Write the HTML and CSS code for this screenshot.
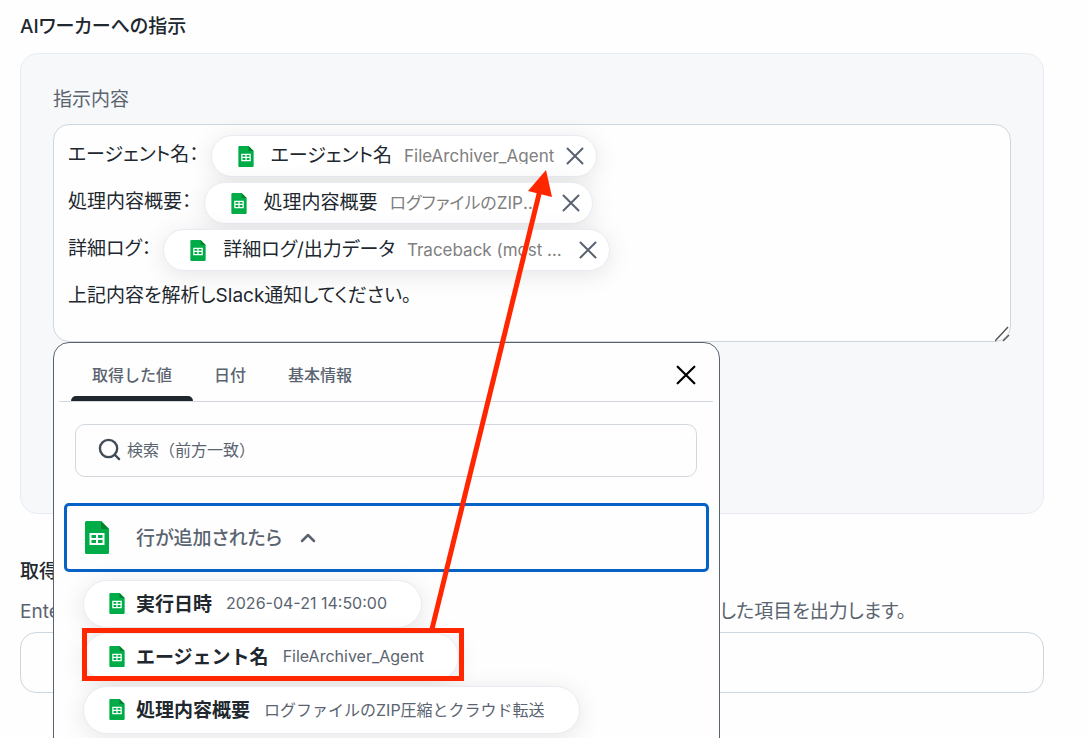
FILE: index.html
```html
<!DOCTYPE html>
<html lang="ja">
<head>
    <meta charset="UTF-8">
    <meta name="viewport" content="width=device-width, initial-scale=1.0">
    <title>AIワーカー設定</title>
    <link rel="stylesheet" href="styles.css">
</head>
<body>
    <!-- shared icons -->
    <svg class="sprite" aria-hidden="true">
        <symbol id="icon-sheet" viewBox="0 0 24 33">
            <path d="M1.5 0H16l8 8v23.5a1.5 1.5 0 0 1-1.5 1.5h-21A1.5 1.5 0 0 1 0 31.5V1.5A1.5 1.5 0 0 1 1.5 0z" fill="#00ac47"/>
            <path d="M16 0l8 8h-6.5a1.5 1.5 0 0 1-1.5-1.5z" fill="#00832d"/>
            <path d="M4.5 12h15v12h-15zM6.5 14v3h4.5v-3zm6.5 0v3h4.5v-3zm-6.5 5v3h4.5v-3zm6.5 0v3h4.5v-3z" fill="#fff" fill-rule="evenodd"/>
        </symbol>
        <symbol id="icon-close" viewBox="0 0 18 18">
            <path d="M1.5 1.5l15 15M16.5 1.5l-15 15" fill="none" stroke="currentColor" stroke-linecap="round"/>
        </symbol>
    </svg>

    <main class="page">
        <section class="section">
            <h2 class="section-title">AIワーカーへの指示</h2>
            <div class="panel">
                <div class="panel-label" id="editor-label">指示内容</div>
                <div class="editor-wrap">
                    <div class="editor" role="textbox" aria-multiline="true" aria-labelledby="editor-label" contenteditable="true" spellcheck="false">
                        <p class="line">エージェント名：
                            <span class="chip" contenteditable="false">
                                <svg class="chip-icon"><use href="#icon-sheet"/></svg>
                                <span class="chip-name">エージェント名</span>
                                <span class="chip-value">FileArchiver_Agent</span>
                                <button class="chip-remove" type="button" aria-label="削除"><svg><use href="#icon-close"/></svg></button>
                            </span>
                        </p>
                        <p class="line">処理内容概要：
                            <span class="chip" contenteditable="false">
                                <svg class="chip-icon"><use href="#icon-sheet"/></svg>
                                <span class="chip-name">処理内容概要</span>
                                <span class="chip-value">ログファイルのZIP圧縮とクラウド転送</span>
                                <button class="chip-remove" type="button" aria-label="削除"><svg><use href="#icon-close"/></svg></button>
                            </span>
                        </p>
                        <p class="line">詳細ログ：
                            <span class="chip" contenteditable="false">
                                <svg class="chip-icon"><use href="#icon-sheet"/></svg>
                                <span class="chip-name">詳細ログ/出力データ</span>
                                <span class="chip-value">Traceback (most recent call last)</span>
                                <button class="chip-remove" type="button" aria-label="削除"><svg><use href="#icon-close"/></svg></button>
                            </span>
                        </p>
                        <p class="line">上記内容を解析しSlack通知してください。</p>
                    </div>
                    <svg class="resize-grip" viewBox="0 0 16 16"><path d="M0 15L13 1M8 15l6-6" fill="none" stroke="#555" stroke-width="1.5"/></svg>

                    <!-- value picker, opens under the editor -->
                    <div class="picker">
                        <div class="tab-bar">
                            <div class="tabs" role="tablist">
                                <button class="tab active" type="button" role="tab" aria-selected="true">取得した値</button>
                                <button class="tab" type="button" role="tab" aria-selected="false">日付</button>
                                <button class="tab" type="button" role="tab" aria-selected="false">基本情報</button>
                            </div>
                            <button class="picker-close" type="button" aria-label="閉じる"><svg><use href="#icon-close"/></svg></button>
                        </div>
                        <label class="search">
                            <svg class="search-icon" viewBox="0 0 24 24"><circle cx="11" cy="11" r="9" fill="none" stroke="#424c57" stroke-width="2.5"/><path d="M17.5 17.5l4.5 4.5" stroke="#424c57" stroke-width="2.5" stroke-linecap="round"/></svg>
                            <input class="search-input" type="text" aria-label="検索" placeholder="検索（前方一致）">
                        </label>
                        <button class="group" type="button" aria-expanded="true">
                            <svg class="group-icon"><use href="#icon-sheet"/></svg>
                            <span class="group-name">行が追加されたら</span>
                            <svg class="chevron" viewBox="0 0 16 10"><path d="M2 8l6-6 6 6" fill="none" stroke="currentColor" stroke-width="2.5" stroke-linecap="round" stroke-linejoin="round"/></svg>
                        </button>
                        <div class="options">
                            <button class="option" type="button">
                                <svg class="chip-icon"><use href="#icon-sheet"/></svg>
                                <span class="option-name">実行日時</span>
                                <span class="option-value">2026-04-21 14:50:00</span>
                            </button>
                            <button class="option" type="button">
                                <svg class="chip-icon"><use href="#icon-sheet"/></svg>
                                <span class="option-name">エージェント名</span>
                                <span class="option-value">FileArchiver_Agent</span>
                            </button>
                            <button class="option" type="button">
                                <svg class="chip-icon"><use href="#icon-sheet"/></svg>
                                <span class="option-name">処理内容概要</span>
                                <span class="option-value">ログファイルのZIP圧縮とクラウド転送</span>
                            </button>
                        </div>
                    </div>
                </div>
            </div>
        </section>

        <section class="section">
            <label class="section-title" for="output-items">取得したい項目</label>
            <p class="description">Enterキーを押すと項目を複数追加できます。AIワーカーの処理結果から、この欄で入力した項目を出力します。</p>
            <input class="text-input" type="text" id="output-items">
        </section>

        <!-- guide arrow from the option to the inserted chip -->
        <svg class="guide" viewBox="0 0 1088 738" aria-hidden="true">
            <rect x="84.5" y="630.5" width="377" height="48"/>
            <path class="guide-line" d="M432 629L540 190"/>
            <path class="guide-head" d="M546 170L528 191L552 197z"/>
        </svg>
    </main>
</body>
</html>
```

FILE: styles.css
```css
* {
    box-sizing: border-box;
}

body {
    margin: 0;
    overflow: hidden;
    background: #fefefe;
    color: #21272e;
    font-family: Inter, "Noto Sans CJK JP", sans-serif;
    font-size: 19px;
    font-feature-settings: "palt";
}

button,
input {
    font: inherit;
    color: inherit;
}

button {
    border: none;
    background: none;
    padding: 0;
    cursor: pointer;
}

p {
    margin: 0;
}

.sprite {
    position: absolute;
    width: 0;
    height: 0;
}

.page {
    position: relative;
    padding: 13px 44px 0 20px;
    height: 100vh;
    overflow: hidden;
}

.section {
    margin-bottom: 44px;
}

.section-title {
    display: block;
    margin: 0;
    font-size: 19px;
    line-height: 28px;
    font-weight: 500;
}

.panel {
    margin-top: 12px;
    padding: 32px 32px 171px;
    border: 1px solid #e8ecf2;
    border-radius: 18px;
    background: #f6f8fa;
}

.panel-label {
    margin-bottom: 10px;
    line-height: 28px;
    color: #5a6470;
}

.editor-wrap {
    position: relative;
}

.editor {
    min-height: 218px;
    padding: 6px 14px;
    border: 1px solid #ced6df;
    border-radius: 16px;
    background: #fefefe;
    outline: none;
}

.line {
    display: flex;
    align-items: flex-start;
    gap: 12px;
    height: 47px;
    line-height: 47px;
}

.chip {
    display: flex;
    align-items: center;
    height: 42px;
    margin-top: 4px;
    padding: 0 12px 0 26px;
    border: 1px solid #e8ecf2;
    border-radius: 21px;
    background: #fff;
    box-shadow: 0 4px 24px rgba(0, 0, 0, 0.1);
    line-height: 40px;
}

.chip-icon {
    width: 16px;
    height: 21px;
}

.chip-name {
    margin: 0 12px 0 17px;
}

.chip-value {
    max-width: 160px;
    overflow: hidden;
    white-space: nowrap;
    text-overflow: ellipsis;
    font-size: 17px;
    line-height: 16px;
    color: #808080;
}

.chip-remove {
    display: flex;
    margin-left: 12px;
    color: #5a6470;
}

.chip-remove svg {
    width: 18px;
    height: 18px;
    stroke-width: 2;
}

.resize-grip {
    position: absolute;
    right: 0;
    bottom: 0;
    width: 16px;
    height: 16px;
}

.picker {
    position: absolute;
    top: 100%;
    left: 0;
    z-index: 1;
    width: 667px;
    max-width: 100%;
    height: 440px;
    padding: 0 6px 0 5px;
    border: 1px solid #5a6470;
    border-radius: 16px;
    background: #fefefe;
}

.tab-bar {
    display: flex;
    justify-content: space-between;
    padding: 6px 17px 0 12px;
    border-bottom: 1px solid #d3d8df;
}

.tabs {
    display: flex;
}

.tab {
    position: relative;
    height: 52px;
    padding: 0 21px 2px;
    font-size: 16px;
    font-weight: 500;
    font-feature-settings: normal;
    color: #5a6470;
}

.tab.active::after {
    content: "";
    position: absolute;
    left: 0;
    right: 0;
    bottom: 0;
    height: 5px;
    border-radius: 5px 5px 0 0;
    background: #21272e;
}

.picker-close {
    color: #000;
}

.picker-close svg {
    display: block;
    width: 20px;
    height: 20px;
    stroke-width: 2;
}

.search {
    display: flex;
    align-items: center;
    gap: 6px;
    height: 53px;
    margin: 22px 16px 26px;
    padding: 0 22px 2px;
    border: 1px solid #d3d8df;
    border-radius: 10px;
}

.search-icon {
    width: 23px;
    height: 23px;
}

.search-input {
    flex: 1;
    padding: 0;
    border: none;
    outline: none;
    background: none;
    font-size: 16px;
    font-feature-settings: normal;
}

.search-input::placeholder {
    color: #5a6470;
    opacity: 1;
}

.group {
    display: flex;
    align-items: center;
    width: calc(100% - 9px);
    height: 69px;
    margin: 0 4px 0 5px;
    padding: 0 18px;
    border: 3px solid #0662c7;
    border-radius: 5px;
    font-weight: 500;
    color: #5a6470;
}

.group-icon {
    width: 24px;
    height: 33px;
    margin-right: 27px;
}

.group-name {
    padding-bottom: 2px;
}

.chevron {
    width: 16px;
    height: 10px;
    margin-left: 18px;
}

.options {
    display: flex;
    flex-direction: column;
    align-items: flex-start;
    gap: 5px;
    padding: 8px 24px;
}

.option {
    display: flex;
    align-items: center;
    height: 48px;
    padding: 0 34px 2px 25px;
    border: 1px solid #e8ecf2;
    border-radius: 24px;
    background: #fff;
    box-shadow: 0 4px 24px rgba(0, 0, 0, 0.1);
    font-feature-settings: normal;
}

.option-name {
    margin: 0 14px 2px 11px;
    font-weight: 700;
}

.option-value {
    font-size: 16px;
    color: #5a6470;
}

.description {
    margin: 12px 0 6px;
    line-height: 28px;
    white-space: nowrap;
    color: #5a6470;
}

.text-input {
    width: 100%;
    height: 61px;
    padding: 0 16px;
    border: 1px solid #ced6df;
    border-radius: 16px;
    background: #fefefe;
}

.guide {
    position: absolute;
    top: 0;
    left: 0;
    z-index: 2;
    width: 1088px;
    height: 738px;
    pointer-events: none;
}

.guide rect,
.guide-line {
    fill: none;
    stroke: #ff2600;
    stroke-width: 5;
}

.guide-head {
    fill: #ff2600;
}
```
